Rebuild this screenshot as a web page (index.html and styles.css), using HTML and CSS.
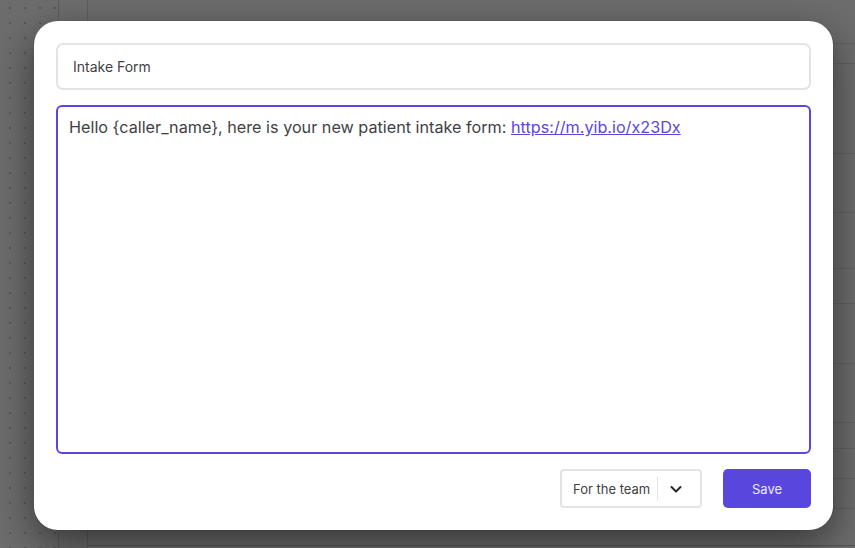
FILE: index.html
```html
<!DOCTYPE html>
<html>
<head>
<meta charset="utf-8">
<link rel="stylesheet" href="styles.css">
</head>
<body>
<div class="backdrop">
  <div class="modal">
    <div class="title-input">Intake Form</div>
    <div class="message-box">Hello {caller_name}, here is your new patient intake form: <a class="link" href="#">https://m.yib.io/x23Dx</a></div>
    <div class="footer">
      <div class="select">
        <span class="select-label">For the team</span>
        <span class="select-divider"></span>
        <span class="select-arrow">
          <svg width="14" height="14" viewBox="0 0 14 14"><path d="M2.5 5l4.5 4.5 4.5-4.5" fill="none" stroke="#27272a" stroke-width="2" stroke-linecap="round" stroke-linejoin="round"/></svg>
        </span>
      </div>
      <button class="save-btn">Save</button>
    </div>
  </div>
</div>
</body>
</html>
```

FILE: styles.css
```css
html, body {
  margin: 0;
  padding: 0;
}
body {
  width: 855px;
  height: 548px;
  overflow: hidden;
  font-family: Inter, "Noto Sans", sans-serif;
  background-color: #6d6d6d;
  background-image:
    linear-gradient(to right, transparent 58px, #5e5e5e 58px, #5e5e5e 59px, transparent 59px),
    linear-gradient(to right, transparent 87px, #5e5e5e 87px, #5e5e5e 88px, transparent 88px),
    linear-gradient(to bottom, transparent 43px, #626262 43px, #626262 44px, transparent 44px, transparent 63px, #626262 63px, #626262 64px, transparent 64px, transparent 153px, #626262 153px, #626262 154px, transparent 154px, transparent 212px, #626262 212px, #626262 213px, transparent 213px, transparent 268px, #626262 268px, #626262 269px, transparent 269px, transparent 303px, #626262 303px, #626262 304px, transparent 304px, transparent 363px, #626262 363px, #626262 364px, transparent 364px, transparent 422px, #626262 422px, #626262 423px, transparent 423px, transparent 448px, #626262 448px, #626262 449px, transparent 449px, transparent 478px, #626262 478px, #626262 479px, transparent 479px, transparent 508px, #626262 508px, #626262 509px, transparent 509px, transparent 545px, #555 545px, #555 546px, transparent 546px),
    linear-gradient(to right, transparent 59px, #6d6d6d 59px),
    radial-gradient(circle at 10px 8px, #585858 1px, transparent 1.5px);
  background-size: 855px 548px, 855px 548px, 767px 548px, 855px 548px, 15px 15px;
  background-position: 0 0, 0 0, 88px 0, 0 0, 0 0;
  background-repeat: no-repeat, no-repeat, no-repeat, no-repeat, repeat;
}
.backdrop {
  padding: 21px 0 0 34px;
}
.modal {
  box-sizing: border-box;
  width: 799px;
  height: 509px;
  background: #ffffff;
  border-radius: 24px;
  padding: 22px 22px 22px 22px;
  display: flex;
  flex-direction: column;
  gap: 15px;
  box-shadow: 0 14px 40px rgba(0, 0, 0, 0.5), 0 0 0 1px rgba(0,0,0,0.04);
}
.title-input {
  box-sizing: border-box;
  height: 47px;
  border: 2px solid #e4e4e7;
  border-radius: 7px;
  padding: 0 15px 1px;
  display: flex;
  align-items: center;
  font-size: 14px;
  color: #3f3f46;
}
.message-box {
  box-sizing: border-box;
  height: 349px;
  border: 2px solid #5b47e0;
  border-radius: 6px;
  padding: 8px 11px;
  font-size: 16.2px;
  line-height: 24px;
  color: #3f3f46;
}
.link {
  color: #5b47e0;
  text-decoration: underline;
}
.footer {
  display: flex;
  justify-content: flex-end;
  align-items: center;
  gap: 21px;
}
.select {
  box-sizing: border-box;
  width: 142px;
  height: 39px;
  border: 2px solid #e4e4e7;
  border-radius: 4px;
  display: flex;
  align-items: center;
  padding-left: 11px;
}
.select-label {
  font-size: 13px;
  color: #3f3f46;
}
.select-divider {
  width: 1px;
  height: 25px;
  background: #e4e4e7;
  margin-left: 7px;
}
.select-arrow {
  display: flex;
  align-items: center;
  margin-left: 11px;
}
.save-btn {
  box-sizing: border-box;
  width: 88px;
  height: 39px;
  border: none;
  border-radius: 5px;
  background: #5846dd;
  color: #ecebfd;
  font-family: Inter, "Noto Sans", sans-serif;
  font-size: 13px;
  padding: 0;
}
```
